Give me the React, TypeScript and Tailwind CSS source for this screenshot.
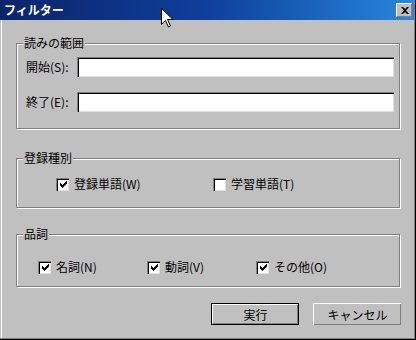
import React from 'react';

const font = { fontFamily: '"Noto Sans CJK JP", "Liberation Sans", sans-serif' };

const Check = ({ checked }: { checked: boolean }) => (
  <span className="w-[13px] h-[13px] bg-white border-t border-l border-[#808080] border-b-white border-r-white shadow-[inset_1px_1px_0_#000,inset_-1px_-1px_0_#dfdfdf] flex items-center justify-center shrink-0">
    {checked && (
      <svg width="7" height="7" viewBox="0 0 7 7">
        <path d="M0 2h1v1h1v1h1V3h1V2h1V1h1V0h1v3H6v1H5v1H4v1H3v1H2V6H1V5H0z" fill="#000" />
      </svg>
    )}
  </span>
);

const Group = ({ title, className, children }: { title: string; className: string; children: React.ReactNode }) => (
  <div className={`relative w-[384px] border border-[#808080] shadow-[1px_1px_0_#fff,inset_1px_1px_0_#fff] ${className}`}>
    <span className="absolute left-[6px] top-[-9px] bg-[#c0c0c0] px-[1px] text-[12px] leading-[16px] text-black">{title}</span>
    {children}
  </div>
);

const Field = ({ label }: { label: string }) => (
  <div className="flex items-center">
    <span className="w-[51px] text-[12px] leading-[16px] text-black">{label}</span>
    <span className="w-[317px] h-[20px] bg-white border-t border-l border-[#808080] border-b-white border-r-white shadow-[inset_1px_1px_0_#000,inset_-1px_-1px_0_#dfdfdf]" />
  </div>
);

const Item = ({ label, w, checked = true }: { label: string; w: string; checked?: boolean }) => (
  <div className={`flex items-center gap-[5px] h-[16px] ${w}`}>
    <Check checked={checked} />
    <span className="text-[12px] leading-[16px] text-black">{label}</span>
  </div>
);

export default function App() {
  return (
    <div className="w-[416px] h-[340px] bg-[#c0c0c0] border-r border-b border-black relative overflow-hidden" style={font}>
      <div className="h-full border-r border-b border-[#808080] flex flex-col">
        <div className="h-[20px] shrink-0 bg-gradient-to-r from-[#0a246a] via-[#0f3f9c] to-[#2a86dc] flex items-center justify-between pl-[4px] pr-[2px]">
          <span className="text-white font-bold text-[12px] leading-[16px]">フィルター</span>
          <span className="w-[16px] h-[14px] bg-[#c0c0c0] border-t border-l border-white border-b-black border-r-black shadow-[inset_-1px_-1px_0_#808080] flex items-center justify-center">
            <svg width="8" height="7" viewBox="0 0 8 7">
              <path d="M0 0h2l2 2 2-2h2L5 3.5 8 7H6L4 5 2 7H0l3-3.5z" fill="#000" />
            </svg>
          </span>
        </div>
        <div className="flex-1 ml-[1px] border-l border-white pl-[14px] pt-[23px]">
          <Group title="読みの範囲" className="h-[86px] pl-[9px] pt-[13px] flex flex-col gap-[15px]">
            <Field label="開始(S):" />
            <Field label="終了(E):" />
          </Group>
          <Group title="登録種別" className="mt-[29px] h-[50px] pl-[39px] pt-[17px] flex items-start">
            <Item label="登録単語(W)" w="w-[157px]" />
            <Item label="学習単語(T)" w="w-[120px]" checked={false} />
          </Group>
          <Group title="品詞" className="mt-[26px] h-[53px] pl-[21px] pt-[24px] flex items-start">
            <Item label="名詞(N)" w="w-[109px]" />
            <Item label="動詞(V)" w="w-[109px]" />
            <Item label="その他(O)" w="w-[109px]" />
          </Group>
          <div className="mt-[16px] ml-[195px] flex gap-[14px]">
            <div className="w-[88px] h-[22px] border border-black">
              <div className="h-full border-t border-l border-white border-b-black border-r-black shadow-[inset_-1px_-1px_0_#808080] flex items-center justify-center text-[12px] text-black">実行</div>
            </div>
            <div className="w-[88px] h-[22px] border-t border-l border-white border-b-black border-r-black shadow-[inset_-1px_-1px_0_#808080] flex items-center justify-center text-[12px] text-black">キャンセル</div>
          </div>
        </div>
      </div>
      <svg className="absolute left-[161px] top-[8px]" width="12" height="20" viewBox="0 0 12 20">
        <path d="M0.5 0.5v16l4-4 3 6.5 2-1-3-6.5h5.5z" fill="#fff" stroke="#000" strokeWidth="1" />
      </svg>
    </div>
  );
}
